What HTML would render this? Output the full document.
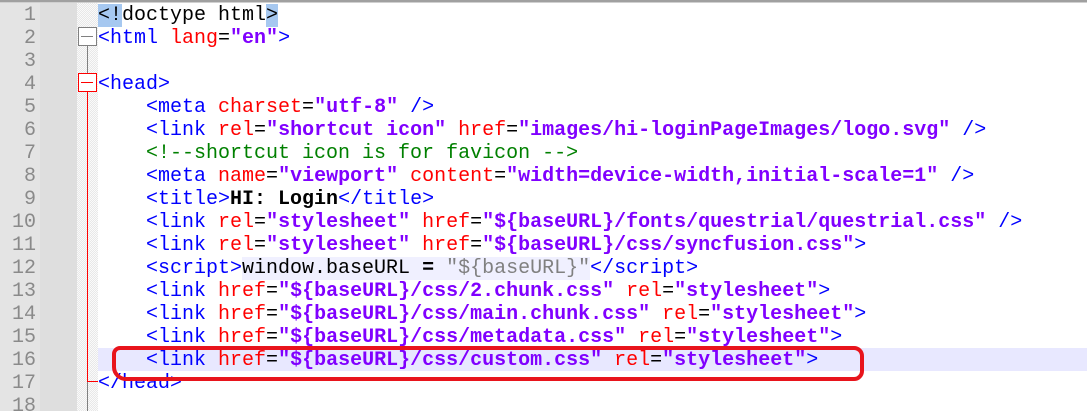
<!DOCTYPE html>
<html><head><meta charset="utf-8"><style>
body{margin:0;width:1087px;height:411px;overflow:hidden;background:#fff;position:relative;font-family:"Liberation Mono",monospace;}
.top{position:absolute;left:0;top:0;width:1087px;height:3px;background:#a0a0a0;border-bottom:1px solid #d0d0d0;box-sizing:border-box}
.g1{position:absolute;left:0;top:3px;width:40px;height:408px;background:#e4e4e4}
.g2{position:absolute;left:40px;top:3px;width:37px;height:408px;background:#dedede}
.fold{position:absolute;left:77px;top:3px;width:21px;height:408px;background-color:#f4f4f4;background-image:repeating-conic-gradient(#e8e8e8 0 25%,#fafafa 0 50%);background-size:2px 2px}
.num{position:absolute;left:0;width:36px;text-align:right;font-size:20px;line-height:23px;color:#8a8a8a;margin-top:2px}
.line{position:absolute;left:98px;font-size:20px;line-height:23px;white-space:pre;color:#000;margin-top:2px}
.t{color:#0000ff}.a{color:#ff0000}.s{color:#8000ff;font-weight:bold}.c{color:#008000}.b{font-weight:bold}.gr{color:#808080}
.hl{position:absolute;left:98px;top:348px;width:989px;height:23px;background:#e8e8ff}
.sb{background:#f0f0ff}
.bm{background:#a6c8f0}
</style></head><body>
<div class="top"></div><div class="g1"></div><div class="g2"></div><div class="fold"></div>
<div class="hl"></div>
<div style="position:absolute;left:87px;top:46px;width:1px;height:365px;background:#808080"></div>
<div style="position:absolute;left:78px;top:27px;width:17px;height:17px;border:1px solid #808080;background:#fff"></div>
<div style="position:absolute;left:81px;top:36px;width:12px;height:1px;background:#808080"></div>
<div style="position:absolute;left:87px;top:91px;width:1px;height:290px;background:#ff0000"></div>
<div style="position:absolute;left:87px;top:381px;width:11px;height:1px;background:#ff0000"></div>
<div style="position:absolute;left:78px;top:73px;width:17px;height:17px;border:1px solid #ff0000;background:#fff"></div>
<div style="position:absolute;left:81px;top:82px;width:12px;height:1px;background:#ff0000"></div>

<div class="num" style="top:2px">1</div><div class="num" style="top:25px">2</div><div class="num" style="top:48px">3</div><div class="num" style="top:71px">4</div><div class="num" style="top:94px">5</div><div class="num" style="top:117px">6</div><div class="num" style="top:140px">7</div><div class="num" style="top:163px">8</div><div class="num" style="top:186px">9</div><div class="num" style="top:209px">10</div><div class="num" style="top:232px">11</div><div class="num" style="top:255px">12</div><div class="num" style="top:278px">13</div><div class="num" style="top:301px">14</div><div class="num" style="top:324px">15</div><div class="num" style="top:347px">16</div><div class="num" style="top:370px">17</div><div class="num" style="top:393px">18</div>

<div class="line" style="top:2px"><span class="bm">&lt;!</span>doctype html<span class="bm">&gt;</span></div>
<div class="line" style="top:25px"><span class="t">&lt;html </span><span class="a">lang</span>=<span class="s">"en"</span><span class="t">&gt;</span></div>
<div class="line" style="top:71px"><span class="t">&lt;head&gt;</span></div>
<div class="line" style="top:94px">    <span class="t">&lt;meta </span><span class="a">charset</span>=<span class="s">"utf-8"</span><span class="t"> /&gt;</span></div>
<div class="line" style="top:117px">    <span class="t">&lt;link </span><span class="a">rel</span>=<span class="s">"shortcut icon"</span> <span class="a">href</span>=<span class="s">"images/hi-loginPageImages/logo.svg"</span><span class="t"> /&gt;</span></div>
<div class="line" style="top:140px">    <span class="c">&lt;!--shortcut icon is for favicon --&gt;</span></div>
<div class="line" style="top:163px">    <span class="t">&lt;meta </span><span class="a">name</span>=<span class="s">"viewport"</span> <span class="a">content</span>=<span class="s">"width=device-width,initial-scale=1"</span><span class="t"> /&gt;</span></div>
<div class="line" style="top:186px">    <span class="t">&lt;title&gt;</span><span class="b">HI: Login</span><span class="t">&lt;/title&gt;</span></div>
<div class="line" style="top:209px">    <span class="t">&lt;link </span><span class="a">rel</span>=<span class="s">"stylesheet"</span> <span class="a">href</span>=<span class="s">"${baseURL}/fonts/questrial/questrial.css"</span><span class="t"> /&gt;</span></div>
<div class="line" style="top:232px">    <span class="t">&lt;link </span><span class="a">rel</span>=<span class="s">"stylesheet"</span> <span class="a">href</span>=<span class="s">"${baseURL}/css/syncfusion.css"</span><span class="t">&gt;</span></div>
<div class="line" style="top:255px">    <span class="t">&lt;script&gt;</span><span class="sb">window.baseURL <span class="b">=</span> <span class="gr">"${baseURL}"</span></span><span class="t">&lt;/script&gt;</span></div>
<div class="line" style="top:278px">    <span class="t">&lt;link </span><span class="a">href</span>=<span class="s">"${baseURL}/css/2.chunk.css"</span> <span class="a">rel</span>=<span class="s">"stylesheet"</span><span class="t">&gt;</span></div>
<div class="line" style="top:301px">    <span class="t">&lt;link </span><span class="a">href</span>=<span class="s">"${baseURL}/css/main.chunk.css"</span> <span class="a">rel</span>=<span class="s">"stylesheet"</span><span class="t">&gt;</span></div>
<div class="line" style="top:324px">    <span class="t">&lt;link </span><span class="a">href</span>=<span class="s">"${baseURL}/css/metadata.css"</span> <span class="a">rel</span>=<span class="s">"stylesheet"</span><span class="t">&gt;</span></div>
<div class="line" style="top:347px">    <span class="t">&lt;link </span><span class="a">href</span>=<span class="s">"${baseURL}/css/custom.css"</span> <span class="a">rel</span>=<span class="s">"stylesheet"</span><span class="t">&gt;</span></div>
<div class="line" style="top:370px"><span class="t">&lt;/head&gt;</span></div>

<div style="position:absolute;left:112px;top:346px;width:744px;height:27px;border:4px solid #e8141c;border-radius:8px 10px 10px 14px"></div>
</body></html>
